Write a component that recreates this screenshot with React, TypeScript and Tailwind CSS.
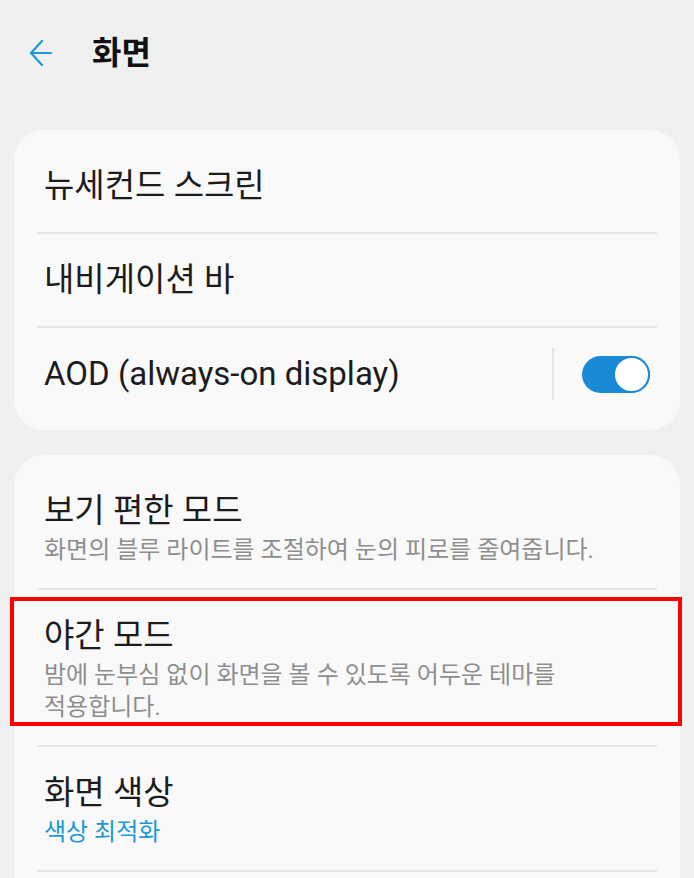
import React from "react";

const ko = { fontFamily: 'Roboto, "Noto Sans CJK KR", sans-serif' };

function Divider() {
  return <div className="mx-[23px] h-[2px] bg-[#e6e6e6]" />;
}

function SimpleRow({ label, children }: { label: string; children?: React.ReactNode }) {
  return (
    <div className="flex h-[92px] items-center pl-[30px] pr-[30px]">
      <span className="flex-1 text-[33px] leading-[40px] text-[#1c1c1c]">{label}</span>
      {children}
    </div>
  );
}

function DetailRow({
  title,
  sub,
  blue,
  highlight,
}: {
  title: string;
  sub: string;
  blue?: boolean;
  highlight?: boolean;
}) {
  return (
    <div className="relative px-[30px] pt-[26px] pb-[22px]">
      <div className="text-[33px] leading-[40px] text-[#1c1c1c]">{title}</div>
      <div
        className={`mt-[3px] break-keep text-[24px] leading-[32px] ${
          blue ? "text-[#1b98d5]" : "text-[#8e8e8e]"
        }`}
      >
        {sub}
      </div>
      {/* 강조 표시 박스 */}
      {highlight && (
        <div className="pointer-events-none absolute -left-[4px] -right-[2px] top-[7px] bottom-[19px] border-[4px] border-[#ff0000]" />
      )}
    </div>
  );
}

function Toggle() {
  return (
    <div className="flex items-center">
      <div className="mr-[28px] h-[52px] w-[2px] bg-[#e2e2e2]" />
      <div className="relative h-[37px] w-[68px] rounded-full bg-[#1a8ad6]">
        <div className="absolute right-0 top-0 h-[37px] w-[37px] rounded-full border-[2px] border-[#1a8ad6] bg-white" />
      </div>
    </div>
  );
}

export default function App() {
  return (
    <div className="h-[878px] w-[694px] overflow-hidden bg-[#f0f0f0]" style={ko}>
      {/* 상단 헤더 */}
      <div className="flex h-[106px] items-center pl-[29px]">
        <svg width="24" height="30" viewBox="0 0 24 30" fill="none" stroke="#1a98d8" strokeWidth="2.2" strokeLinecap="round" strokeLinejoin="round">
          <path d="M22 15H2" />
          <path d="M13 3L2 15l11 12" />
        </svg>
        <span className="ml-[39px] text-[32px] font-bold leading-[40px] text-[#111]">화면</span>
      </div>

      <div className="mt-[24px] px-[14px]">
        <div className="rounded-[30px] bg-[#f9f9f9] py-[10px]">
          <SimpleRow label="뉴세컨드 스크린" />
          <Divider />
          <SimpleRow label="내비게이션 바" />
          <Divider />
          <SimpleRow label="AOD (always-on display)">
            <Toggle />
          </SimpleRow>
        </div>

        <div className="mt-[25px] rounded-[30px] bg-[#f9f9f9] pt-[10px] pb-[40px]">
          <DetailRow title="보기 편한 모드" sub="화면의 블루 라이트를 조절하여 눈의 피로를 줄여줍니다." />
          <Divider />
          <DetailRow
            title="야간 모드"
            sub="밤에 눈부심 없이 화면을 볼 수 있도록 어두운 테마를 적용합니다."
            highlight
          />
          <Divider />
          <DetailRow title="화면 색상" sub="색상 최적화" blue />
          <Divider />
        </div>
      </div>
    </div>
  );
}
